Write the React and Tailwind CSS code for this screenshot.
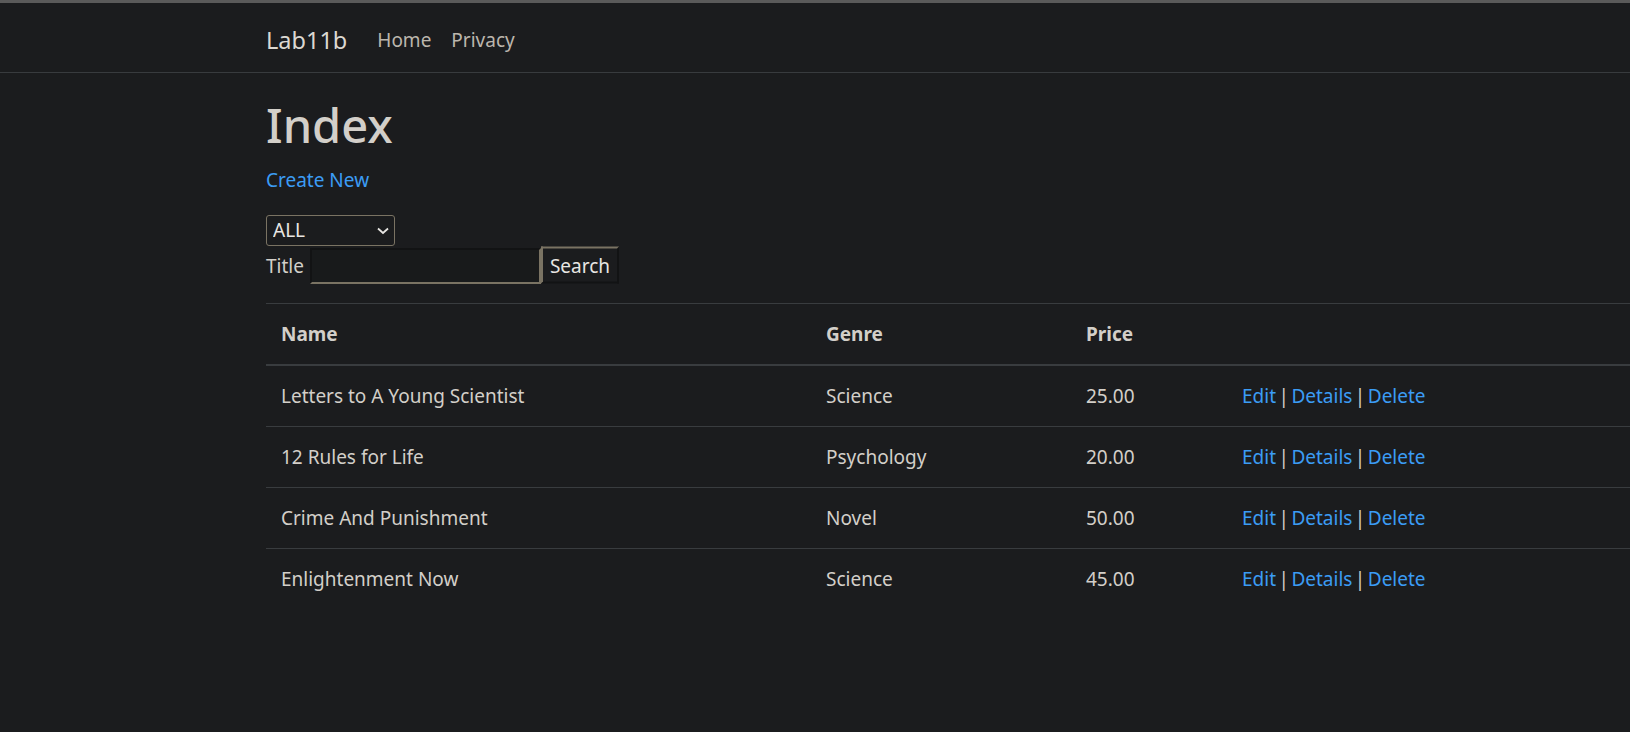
const BOOKS = [
  { name: 'Letters to A Young Scientist', genre: 'Science', price: '25.00' },
  { name: '12 Rules for Life', genre: 'Psychology', price: '20.00' },
  { name: 'Crime And Punishment', genre: 'Novel', price: '50.00' },
  { name: 'Enlightenment Now', genre: 'Science', price: '45.00' },
];

function Chevron() {
  return (
    <svg
      className="pointer-events-none absolute right-[6px] top-[12px]"
      width="12"
      height="8"
      viewBox="0 0 12 8"
      fill="none"
    >
      <path d="M1 1.5l5 4.5 5-4.5" stroke="#e8e6e3" strokeWidth="1.8" />
    </svg>
  );
}

export default function App() {
  return (
    <div
      className="min-h-screen overflow-hidden bg-[#1b1c1e] text-[#d3cfc9] text-[19px] leading-[30px]"
      style={{ fontFamily: '"Noto Sans", "Open Sans", sans-serif' }}
    >
      <div className="h-[3px] bg-[#5a5a5a]" />
      <nav className="flex h-[70px] items-center border-b border-[#383b3e] pl-[266px] pt-[4px]">
        <a className="mr-[20px] text-[23.5px] leading-[36px] text-[#dcd8d2]">Lab11b</a>
        <a className="px-[10px] text-[#bcb6ad]">Home</a>
        <a className="px-[10px] text-[#bcb6ad]">Privacy</a>
      </nav>

      <main className="mt-[22px] pl-[266px]">
        <h1 className="mb-[10px] text-[47px] font-medium leading-[60px] text-[#d3cfc9]">Index</h1>
        <p className="mb-[20px]">
          <a className="text-[#3b9cf5]">Create New</a>
        </p>

        <form>
          <div className="relative w-[129px]">
            <select className="block h-[31px] w-[129px] appearance-none rounded-[3px] border border-[#7a7363] bg-[#1b1c1e] pl-[6px] text-[19px] leading-[29px] text-[#e8e6e3] outline-none">
              <option>ALL</option>
            </select>
            <Chevron />
          </div>
          <div className="mt-[1px] flex items-center">
            <label className="mr-[6px] text-[#d3cfc9]">Title</label>
            <input
              type="text"
              className="h-[36px] w-[231px] border-2 border-t-[#121314] border-l-[#121314] border-b-[#7a7363] border-r-[#7a7363] bg-[#181a1b] px-[4px] text-[#e8e6e3] outline-none"
            />
            <button
              type="button"
              className="h-[37px] w-[78px] -translate-y-[0.5px] border-2 border-t-[#7a7363] border-l-[#7a7363] border-b-[#121314] border-r-[#121314] bg-[#1b1c1e] text-[19px] text-[#e8e6e3]"
            >
              Search
            </button>
          </div>
        </form>

        <table className="mt-[19px] w-full table-fixed border-collapse">
          <thead>
            <tr>
              <th className="w-[545px] border-t border-b-2 border-[#393c3f] px-[15px] py-[15px] text-left font-bold">Name</th>
              <th className="w-[260px] border-t border-b-2 border-[#393c3f] px-[15px] py-[15px] text-left font-bold">Genre</th>
              <th className="w-[156px] border-t border-b-2 border-[#393c3f] px-[15px] py-[15px] text-left font-bold">Price</th>
              <th className="border-t border-b-2 border-[#393c3f] px-[15px] py-[15px]"></th>
            </tr>
          </thead>
          <tbody>
            {BOOKS.map(b => (
              <tr key={b.name}>
                <td className="border-t border-[#393c3f] px-[15px] py-[15px]">{b.name}</td>
                <td className="border-t border-[#393c3f] px-[15px] py-[15px]">{b.genre}</td>
                <td className="border-t border-[#393c3f] px-[15px] py-[15px]">{b.price}</td>
                <td className="border-t border-[#393c3f] px-[15px] py-[15px] [word-spacing:-2.5px]">
                  <a className="text-[#3b9cf5]">Edit</a> | <a className="text-[#3b9cf5]">Details</a> |{' '}
                  <a className="text-[#3b9cf5]">Delete</a>
                </td>
              </tr>
            ))}
          </tbody>
        </table>
      </main>
    </div>
  );
}
